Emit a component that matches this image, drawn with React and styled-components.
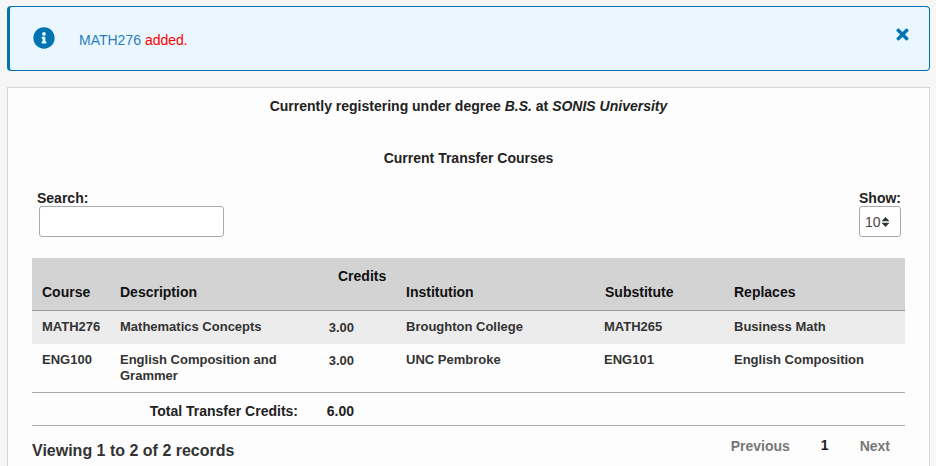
import React from 'react';
import styled, { createGlobalStyle } from 'styled-components';
import { FaInfoCircle, FaTimes } from 'react-icons/fa';

const GlobalStyle = createGlobalStyle`
  html, body {
    margin: 0;
    padding: 0;
    height: 466px;
    overflow: hidden;
    background-color: #f6f6f6;
    font-family: "Liberation Sans", Arial, sans-serif;
    color: #222222;
  }
`;

const Page = styled.div`
  display: flex;
  flex-direction: column;
  gap: 16px;
  height: 466px;
  box-sizing: border-box;
  overflow: hidden;
  padding: 6px 6px 0 7px;
`;

const Alert = styled.div`
  display: flex;
  flex: none;
  align-items: flex-start;
  height: 65px;
  box-sizing: border-box;
  padding: 19px 18px 0 23px;
  background-color: #ebf7fe;
  border: 1px solid #0073b1;
  border-left-width: 3px;
  border-radius: 4px;
  color: #0073b1;
`;

const AlertIcon = styled(FaInfoCircle)`
  font-size: 22px;
  flex: none;
  margin-top: 1px;
`;

const AlertText = styled.div`
  flex: 1;
  margin: 6px 0 0 24px;
  font-size: 14px;
  line-height: 16px;
  color: #2b7cc0;
`;

const Added = styled.span`
  color: #ff0000;
`;

const CloseIcon = styled(FaTimes)`
  font-size: 17px;
  stroke: currentColor;
  stroke-width: 14px;
`;

const Panel = styled.div`
  flex: none;
  height: 420px;
  box-sizing: border-box;
  padding: 0 24px;
  background-color: #fdfdfd;
  border: 1px solid #d6d6d6;
`;

const Centered = styled.div`
  text-align: center;
  font-size: 14px;
  font-weight: bold;
  line-height: 16px;
  padding-top: ${(p) => p.$top}px;
`;

const Controls = styled.div`
  display: flex;
  justify-content: space-between;
  margin-top: 24px;
  padding: 0 4px 0 5px;
`;

const Field = styled.div`
  display: flex;
  flex-direction: column;
  align-items: ${(p) => p.$align};
`;

const FieldLabel = styled.label`
  font-size: 14px;
  font-weight: bold;
  line-height: 16px;
`;

const SearchBox = styled.div`
  width: 185px;
  height: 31px;
  box-sizing: border-box;
  margin-left: 2px;
  border: 1px solid #aaaaaa;
  border-radius: 3px;
  background-color: #ffffff;
`;

const ShowBox = styled.div`
  display: flex;
  align-items: center;
  width: 42px;
  height: 31px;
  box-sizing: border-box;
  padding-left: 5px;
  border: 1px solid #aaaaaa;
  border-radius: 3px;
  background-color: #ffffff;
  font-size: 14px;
  color: #444444;
`;

const Table = styled.table`
  width: 873px;
  margin-top: 21px;
  border-collapse: collapse;
  table-layout: fixed;
  font-size: 14px;
`;

const HeadRow = styled.tr`
  height: 52px;
  background-color: #d3d3d3;
  border-bottom: 1px solid #999999;
`;

const Th = styled.th`
  padding: ${(p) => (p.$raised ? '10px' : '0')} 10px 10px ${(p) => p.$left || '10px'};
  text-align: left;
  vertical-align: ${(p) => (p.$raised ? 'top' : 'bottom')};
  line-height: 16px;
  color: #111111;
`;

const Row = styled.tr`
  height: ${(p) => p.$height}px;
  background-color: ${(p) => (p.$shaded ? '#ececec' : 'transparent')};
`;

const Td = styled.td`
  padding: 8px 10px ${(p) => (p.$nudge ? '8px 9px' : '8px 10px')};
  vertical-align: top;
  font-size: 13px;
  line-height: 16px;
  font-weight: bold;
  color: #333333;
`;

const CreditCell = styled(Td)`
  text-align: right;
  padding: 9px 42px 7px 0;
`;

const TotalRow = styled.tr`
  border-top: 1px solid #aaaaaa;
  border-bottom: 1px solid #aaaaaa;
`;

const TotalLabel = styled.td`
  padding: 11px 20px 7px 0;
  text-align: right;
  font-weight: bold;
  line-height: 14px;
`;

const TotalValue = styled.td`
  padding: 11px 42px 7px 0;
  text-align: right;
  font-weight: bold;
  line-height: 14px;
`;

const Footer = styled.div`
  display: flex;
  align-items: center;
  justify-content: space-between;
  width: 873px;
  margin-top: 12px;
`;

const Viewing = styled.div`
  font-size: 16px;
  font-weight: bold;
  line-height: 18px;
  color: #333333;
`;

const Pager = styled.div`
  display: flex;
  align-items: center;
  gap: 31px;
  padding: 0 15px 10px 0;
  font-size: 14px;
  font-weight: bold;
`;

const PagerLink = styled.span`
  color: #777777;
`;

const PagerCurrent = styled.span`
  color: #222222;
  margin-top: -2px;
`;

const SortArrows = () => (
  <svg width="9" height="10" viewBox="0 0 9 10">
    <path d="M4.5 0 L8.5 4.2 H0.5 Z M4.5 10 L0.5 5.8 H8.5 Z" fill="#333333" />
  </svg>
);

const courses = [
  { code: 'MATH276', description: 'Mathematics Concepts', credits: '3.00', institution: 'Broughton College', substitute: 'MATH265', replaces: 'Business Math', height: 34 },
  { code: 'ENG100', description: 'English Composition and Grammer', credits: '3.00', institution: 'UNC Pembroke', substitute: 'ENG101', replaces: 'English Composition', height: 48 },
];

const App = () => (
  <Page>
    <GlobalStyle />
    <Alert>
      <AlertIcon />
      <AlertText>
        MATH276 <Added>added.</Added>
      </AlertText>
      <CloseIcon />
    </Alert>
    <Panel>
      <Centered $top={10}>
        Currently registering under degree <em>B.S.</em> at <em>SONIS University</em>
      </Centered>
      <Centered $top={36}>Current Transfer Courses</Centered>
      <Controls>
        <Field $align="flex-start">
          <FieldLabel>Search:</FieldLabel>
          <SearchBox />
        </Field>
        <Field $align="flex-end">
          <FieldLabel>Show:</FieldLabel>
          <ShowBox>
            10
            <SortArrows />
          </ShowBox>
        </Field>
      </Controls>
      <Table>
        <colgroup>
          <col width="78" />
          <col width="208" />
          <col width="78" />
          <col width="199" />
          <col width="129" />
          <col width="181" />
        </colgroup>
        <thead>
          <HeadRow>
            <Th>Course</Th>
            <Th>Description</Th>
            <Th $raised $left="20px">Credits</Th>
            <Th>Institution</Th>
            <Th>Substitute</Th>
            <Th>Replaces</Th>
          </HeadRow>
        </thead>
        <tbody>
          {courses.map((course, i) => (
            <Row key={course.code} $shaded={i === 0} $height={course.height}>
              <Td>{course.code}</Td>
              <Td>{course.description}</Td>
              <CreditCell>{course.credits}</CreditCell>
              <Td>{course.institution}</Td>
              <Td $nudge>{course.substitute}</Td>
              <Td>{course.replaces}</Td>
            </Row>
          ))}
          <TotalRow>
            <TotalLabel colSpan={2}>Total Transfer Credits:</TotalLabel>
            <TotalValue>6.00</TotalValue>
            <td colSpan={3} />
          </TotalRow>
        </tbody>
      </Table>
      <Footer>
        <Viewing>Viewing 1 to 2 of 2 records</Viewing>
        <Pager>
          <PagerLink>Previous</PagerLink>
          <PagerCurrent>1</PagerCurrent>
          <PagerLink>Next</PagerLink>
        </Pager>
      </Footer>
    </Panel>
  </Page>
);

export default App;
